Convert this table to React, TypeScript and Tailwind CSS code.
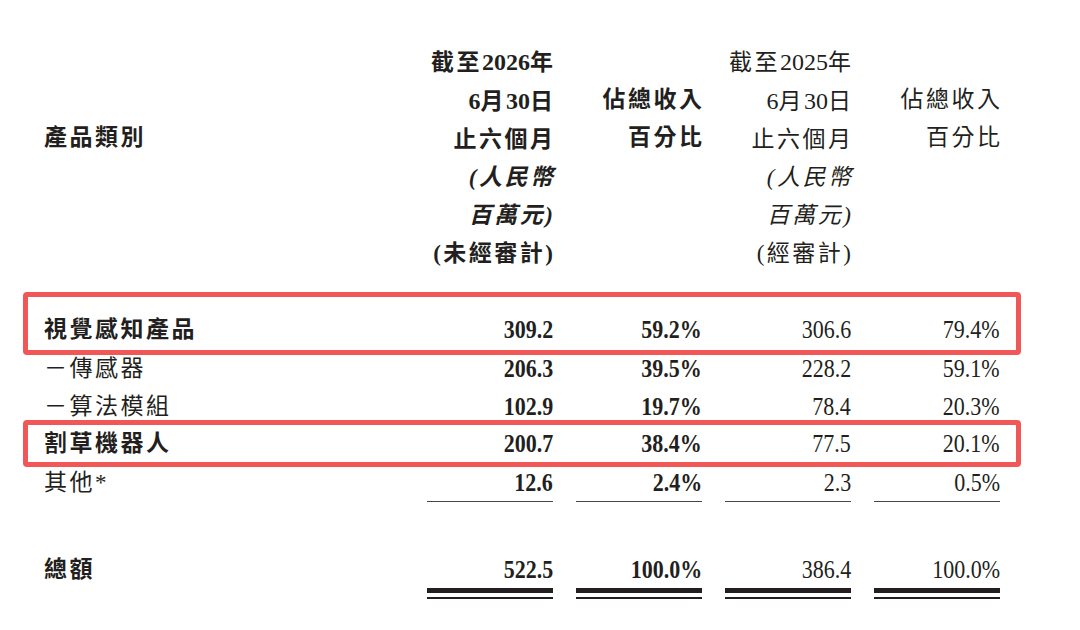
import React from "react";

const GRID = "grid grid-cols-[360px_126px_126px_126px_126px] gap-x-[23px]";

type RowData = { label: string; bold: boolean; vals: [string, string, string, string] };

const ROWS: RowData[] = [
  { label: "視覺感知產品", bold: true, vals: ["309.2", "59.2%", "306.6", "79.4%"] },
  { label: "－傳感器", bold: false, vals: ["206.3", "39.5%", "228.2", "59.1%"] },
  { label: "－算法模組", bold: false, vals: ["102.9", "19.7%", "78.4", "20.3%"] },
  { label: "割草機器人", bold: true, vals: ["200.7", "38.4%", "77.5", "20.1%"] },
  { label: "其他*", bold: false, vals: ["12.6", "2.4%", "2.3", "0.5%"] },
];

function N({ children }: { children: React.ReactNode }) {
  return <span className="text-[24px] tracking-normal">{children}</span>;
}

// condensed figures, like the printed report
function Fig({ v }: { v: string }) {
  return <span className="inline-block align-top origin-right scale-x-[0.88]">{v}</span>;
}

function Row({ row, lh, underline }: { row: RowData; lh: string; underline?: boolean }) {
  return (
    <div className={`${GRID} ${lh}`}>
      <div className={`tracking-[2.5px] text-[23px] ${row.bold ? "font-bold" : ""}`}>{row.label}</div>
      {row.vals.map((v, i) => (
        <div
          key={i}
          className={`text-right text-[25px] ${i < 2 ? "font-bold" : ""} ${underline ? "border-b-[1.5px] border-[#4a4546]" : ""}`}
        >
          <Fig v={v} />
        </div>
      ))}
    </div>
  );
}

function Total({ label, vals }: { label: string; vals: string[] }) {
  return (
    <div className={`${GRID} mt-[50px]`}>
      <div className="tracking-[2.5px] text-[23px] font-bold leading-[36px]">{label}</div>
      {vals.map((v, i) => (
        <div key={i} className="flex flex-col">
          <div className={`text-right text-[25px] leading-[36px] ${i < 2 ? "font-bold" : ""}`}>
            <Fig v={v} />
          </div>
          <div className="h-[5px] bg-[#231f20]" />
          <div className="mt-[4px] h-[2px] bg-[#231f20]" />
        </div>
      ))}
    </div>
  );
}

export default function App() {
  return (
    <div className="w-[1080px] h-[630px] bg-white text-[#231f20] font-['Liberation_Serif','Noto_Sans_CJK_TC',serif] pl-[44px] pt-[43px]">
      <div className="w-[956px]">
        <div className={`${GRID} leading-[38px] text-[23px]`}>
          <div className="mt-[76px] font-bold tracking-[2.5px]">產品類別</div>
          <div className="text-right font-bold tracking-[2.5px] -mr-[2.5px]">
            <div>截至<N>2026</N>年</div>
            <div><N>6</N>月<N>30</N>日</div>
            <div>止六個月</div>
            <div className="italic">(人民幣</div>
            <div className="italic">百萬元)</div>
            <div>(未經審計)</div>
          </div>
          <div className="mt-[38px] text-right font-bold tracking-[2.5px] -mr-[2.5px]">
            <div>佔總收入</div>
            <div>百分比</div>
          </div>
          <div className="text-right tracking-[2.5px] -mr-[2.5px]">
            <div>截至<N>2025</N>年</div>
            <div><N>6</N>月<N>30</N>日</div>
            <div>止六個月</div>
            <div className="italic">(人民幣</div>
            <div className="italic">百萬元)</div>
            <div>(經審計)</div>
          </div>
          <div className="mt-[38px] text-right tracking-[2.5px] -mr-[2.5px]">
            <div>佔總收入</div>
            <div>百分比</div>
          </div>
        </div>

        <div className="mt-[19px] -mx-[21px] -mb-[5px] border-[5px] border-[#f25757] rounded-[4px] px-[16px] pt-[14px] pb-[1px]">
          <Row row={ROWS[0]} lh="leading-[38px]" />
        </div>
        <Row row={ROWS[1]} lh="leading-[38px]" />
        <Row row={ROWS[2]} lh="leading-[38px]" />
        <div className="-mt-[6px] -mx-[21px] -mb-[3px] border-[5px] border-[#f25757] rounded-[4px] px-[16px] pt-[1px]">
          <Row row={ROWS[3]} lh="leading-[36px]" />
        </div>
        <Row row={ROWS[4]} lh="leading-[37px]" underline />

        <Total label="總額" vals={["522.5", "100.0%", "386.4", "100.0%"]} />
      </div>
    </div>
  );
}
